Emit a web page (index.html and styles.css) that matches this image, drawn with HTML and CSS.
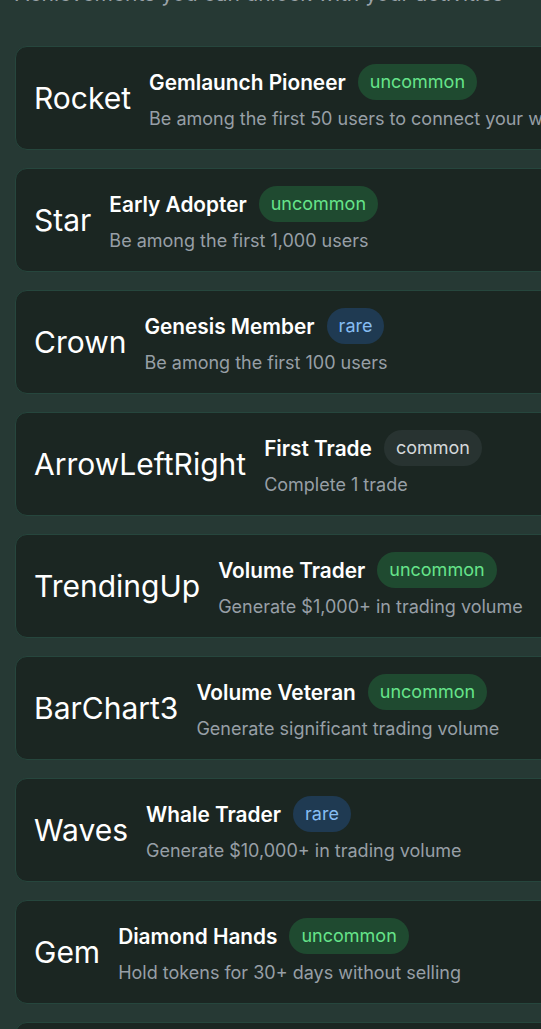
FILE: index.html
```html
<!DOCTYPE html>
<html lang="en">
<head>
<meta charset="utf-8">
<title>Achievements</title>
<link rel="stylesheet" href="styles.css">
</head>
<body>
<main class="page">
  <p class="subtitle">Achievements you can unlock with your activities</p>
  <ul class="list">
    <li class="card">
      <span class="icon">Rocket</span>
      <div class="info">
        <div class="head"><span class="title">Gemlaunch Pioneer</span><span class="badge uncommon">uncommon</span></div>
        <p class="desc">Be among the first 50 users to connect your wallet</p>
      </div>
    </li>
    <li class="card">
      <span class="icon">Star</span>
      <div class="info">
        <div class="head"><span class="title">Early Adopter</span><span class="badge uncommon">uncommon</span></div>
        <p class="desc">Be among the first 1,000 users</p>
      </div>
    </li>
    <li class="card">
      <span class="icon">Crown</span>
      <div class="info">
        <div class="head"><span class="title">Genesis Member</span><span class="badge rare">rare</span></div>
        <p class="desc">Be among the first 100 users</p>
      </div>
    </li>
    <li class="card">
      <span class="icon">ArrowLeftRight</span>
      <div class="info">
        <div class="head"><span class="title">First Trade</span><span class="badge common">common</span></div>
        <p class="desc">Complete 1 trade</p>
      </div>
    </li>
    <li class="card">
      <span class="icon">TrendingUp</span>
      <div class="info">
        <div class="head"><span class="title">Volume Trader</span><span class="badge uncommon">uncommon</span></div>
        <p class="desc">Generate $1,000+ in trading volume</p>
      </div>
    </li>
    <li class="card">
      <span class="icon">BarChart3</span>
      <div class="info">
        <div class="head"><span class="title">Volume Veteran</span><span class="badge uncommon">uncommon</span></div>
        <p class="desc">Generate significant trading volume</p>
      </div>
    </li>
    <li class="card">
      <span class="icon">Waves</span>
      <div class="info">
        <div class="head"><span class="title">Whale Trader</span><span class="badge rare">rare</span></div>
        <p class="desc">Generate $10,000+ in trading volume</p>
      </div>
    </li>
    <li class="card">
      <span class="icon">Gem</span>
      <div class="info">
        <div class="head"><span class="title">Diamond Hands</span><span class="badge uncommon">uncommon</span></div>
        <p class="desc">Hold tokens for 30+ days without selling</p>
      </div>
    </li>
    <li class="card">
      <span class="icon">Users</span>
      <div class="info">
        <div class="head"><span class="title">Community Builder</span><span class="badge rare">rare</span></div>
        <p class="desc">Refer 10 friends who make a trade</p>
      </div>
    </li>
  </ul>
</main>
</body>
</html>
```

FILE: styles.css
```css
html, body {
  margin: 0;
  padding: 0;
  overflow: hidden;
  background: #263934;
}
body {
  font-family: Inter, "Noto Sans", sans-serif;
  color: #fff;
}
.page {
  width: 720px;
  margin-top: -20px;
  padding: 0 15px;
}
.subtitle {
  margin: 0 0 38px;
  font-size: 21px;
  line-height: 28px;
  color: #9aa3a8;
}
.list {
  list-style: none;
  margin: 0;
  padding: 0;
  display: flex;
  flex-direction: column;
  gap: 18px;
}
.card {
  display: flex;
  align-items: center;
  gap: 18px;
  padding: 17px 18px;
  background: #1b2622;
  border: 1px solid #26463d;
  border-radius: 12px;
}
.icon {
  font-size: 30px;
  line-height: 36px;
  color: #fff;
  flex: none;
}
.info {
  display: flex;
  flex-direction: column;
  gap: 6px;
}
.head {
  display: flex;
  align-items: center;
  gap: 12px;
}
.title {
  font-size: 20.8px;
  font-weight: 600;
  color: #fff;
}
.badge {
  font-size: 18px;
  line-height: 24px;
  padding: 6px 12px;
  border-radius: 999px;
}
.uncommon { background: #1f4a30; color: #66e48a; }
.rare { background: #1f3a52; color: #86bdf3; }
.common { background: #283331; color: #d4d8db; }
.desc {
  margin: 0;
  font-size: 18px;
  line-height: 26px;
  color: #979fa6;
  white-space: nowrap;
}
```
